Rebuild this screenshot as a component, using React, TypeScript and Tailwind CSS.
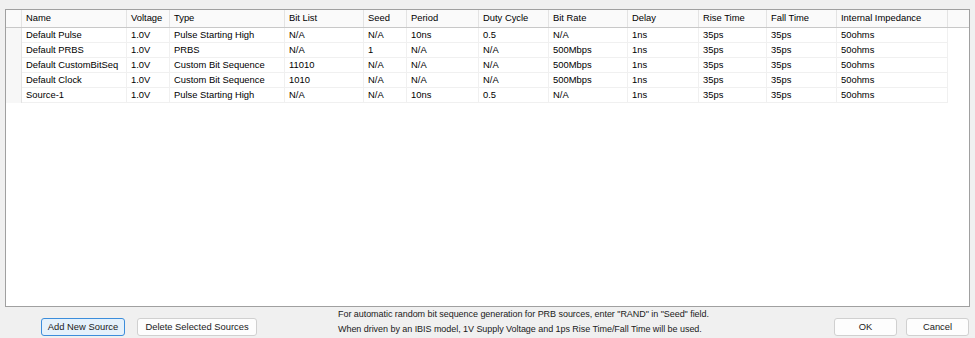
import React from "react";

const columns = [
  { label: "Name", w: 105 },
  { label: "Voltage", w: 43 },
  { label: "Type", w: 115 },
  { label: "Bit List", w: 79 },
  { label: "Seed", w: 43 },
  { label: "Period", w: 72 },
  { label: "Duty Cycle", w: 70 },
  { label: "Bit Rate", w: 79 },
  { label: "Delay", w: 71 },
  { label: "Rise Time", w: 68 },
  { label: "Fall Time", w: 70 },
  { label: "Internal Impedance", w: 111 },
];

const rows = [
  ["Default Pulse", "1.0V", "Pulse Starting High", "N/A", "N/A", "10ns", "0.5", "N/A", "1ns", "35ps", "35ps", "50ohms"],
  ["Default PRBS", "1.0V", "PRBS", "N/A", "1", "N/A", "N/A", "500Mbps", "1ns", "35ps", "35ps", "50ohms"],
  ["Default CustomBitSeq", "1.0V", "Custom Bit Sequence", "11010", "N/A", "N/A", "N/A", "500Mbps", "1ns", "35ps", "35ps", "50ohms"],
  ["Default Clock", "1.0V", "Custom Bit Sequence", "1010", "N/A", "N/A", "N/A", "500Mbps", "1ns", "35ps", "35ps", "50ohms"],
  ["Source-1", "1.0V", "Pulse Starting High", "N/A", "N/A", "10ns", "0.5", "N/A", "1ns", "35ps", "35ps", "50ohms"],
];

const Button = ({ label, className }: { label: string; className: string }) => (
  <button
    className={`h-[18px] rounded-[3px] border text-[9.4px] leading-none text-[#1a1a1a] ${className}`}
  >
    {label}
  </button>
);

const App = () => {
  return (
    <div
      className="w-[975px] h-[338px] bg-[#f0f0f0] flex flex-col overflow-hidden text-black"
      style={{ fontFamily: '"Liberation Sans", Arial, sans-serif' }}
    >
      {/* grid */}
      <div className="mt-[9px] ml-[5px] w-[965px] h-[298px] border border-[#a0a0a0] bg-white flex flex-col overflow-hidden">
        {/* header */}
        <div className="flex h-[18px] shrink-0 bg-[#fafafa] border-b border-[#c8c8c8] text-[9.4px]">
          <div className="w-[16px] shrink-0 border-r border-[#e3e3e3]" />
          {columns.map((c) => (
            <div
              key={c.label}
              className="shrink-0 border-r border-[#e3e3e3] pl-[4px] flex items-center"
              style={{ width: c.w }}
            >
              {c.label}
            </div>
          ))}
          <div className="flex-1" />
        </div>
        {/* rows */}
        {rows.map((r, i) => (
          <div key={i} className="flex h-[15px] shrink-0 text-[9.4px]">
            <div className="w-[16px] shrink-0 bg-[#f7f7f7] border-r border-[#e3e3e3]" />
            {r.map((v, j) => (
              <div
                key={j}
                className="shrink-0 border-b border-r border-[#f0f0f0] pl-[4px] flex items-center"
                style={{ width: columns[j].w }}
              >
                {v}
              </div>
            ))}
            <div className="flex-1" />
          </div>
        ))}
      </div>
      {/* footer */}
      <div className="flex items-start h-[31px]">
        <div className="flex gap-[12px] pl-[41px] pt-[11px]">
          <Button label="Add New Source" className="w-[84px] bg-[#e5f1fb] border-[#3c8ddb]" />
          <Button label="Delete Selected Sources" className="w-[120px] bg-[#fdfdfd] border-[#d0d0d0]" />
        </div>
        <div className="ml-[81px] text-[9px] tracking-[-0.05px] leading-[15px] text-[#1a1a1a]">
          <div>For automatic random bit sequence generation for PRB sources, enter "RAND" in "Seed" field.</div>
          <div>When driven by an IBIS model, 1V Supply Voltage and 1ps Rise Time/Fall Time will be used.</div>
        </div>
        <div className="ml-auto flex gap-[9px] pr-[6px] pt-[11px]">
          <Button label="OK" className="w-[63px] bg-[#fdfdfd] border-[#d0d0d0]" />
          <Button label="Cancel" className="w-[63px] bg-[#fdfdfd] border-[#d0d0d0]" />
        </div>
      </div>
    </div>
  );
};

export default App;
